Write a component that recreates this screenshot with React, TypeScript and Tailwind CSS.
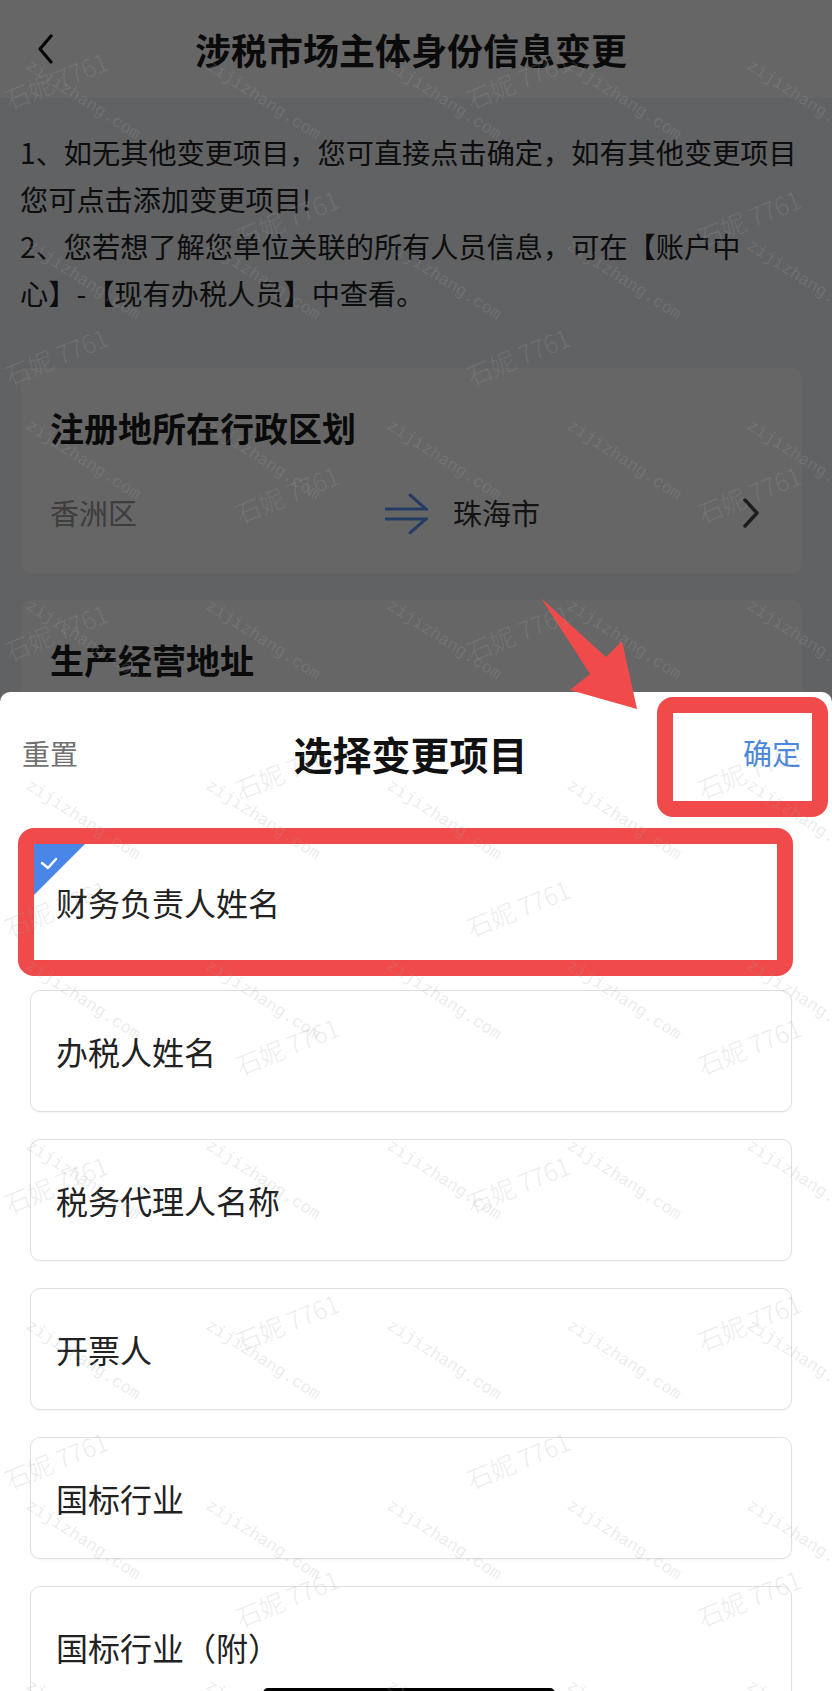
const items = ['财务负责人姓名', '办税人姓名', '税务代理人名称', '开票人', '国标行业', '国标行业（附）']

const notice = [
  '1、如无其他变更项目，您可直接点击确定，如有其他变更项目',
  '您可点击添加变更项目!',
  '2、您若想了解您单位关联的所有人员信息，可在【账户中',
  '心】-【现有办税人员】中查看。',
]

// watermark grid of the screenshot
const nameMarks: { x: number; y: number }[] = []
for (let k = 0; k < 13; k++) {
  const y = 80 + 138 * k
  const xs = k % 2 === 0 ? [56, 518] : [287, 749]
  xs.forEach((x) => nameMarks.push({ x, y }))
}
const siteMarks: { x: number; y: number }[] = []
for (let j = 0; j < 10; j++) {
  for (let i = 0; i < 5; i++) {
    siteMarks.push({ x: 32 + 180.3 * i, y: 57 + 180 * j })
  }
}

function Card({ title, children, className }: { title: string; children?: React.ReactNode; className?: string }) {
  return (
    <div className={`ml-[21px] mr-[30px] rounded-[10px] bg-white px-[29px] pt-[40px] ${className ?? ''}`}>
      <div className="text-[34px] font-bold leading-[40px] text-[#1a1a1a]">{title}</div>
      {children}
    </div>
  )
}

export default function App() {
  return (
    <div className="relative h-[1691px] w-[832px] overflow-hidden bg-[#f1f4f9] font-['Noto_Sans_CJK_SC','Noto_Sans',sans-serif]">
      {/* page under the sheet */}
      <div className="flex h-[98px] items-center bg-white pl-[37px]">
        <svg width="16" height="30" viewBox="0 0 16 30" fill="none">
          <polyline points="14,2 3,15 14,28" stroke="#111" strokeWidth="3.2" strokeLinecap="round" strokeLinejoin="round" />
        </svg>
        <h1 className="flex-1 pr-[63px] text-center text-[36px] font-bold text-[#1a1a1a]">涉税市场主体身份信息变更</h1>
      </div>

      <div className="pl-[20px] pt-[30px] text-[28.2px] leading-[47px] text-[#222]">
        {notice.map((line) => (
          <p key={line} className="whitespace-nowrap">{line}</p>
        ))}
      </div>

      <Card title="注册地所在行政区划" className="mt-[52px] pb-[40px]">
        <div className="mt-[45px] flex h-[40px] items-center text-[29px]">
          <span className="w-[335px] text-[#9a9a9a]">香洲区</span>
          <svg width="43" height="42" viewBox="0 0 43 42" fill="none" stroke="#5b95f5" strokeWidth="3" strokeLinecap="round">
            <path d="M1 17 H41 L25 3" />
            <path d="M1 27 H41 L25 41" />
          </svg>
          <span className="ml-[25px] flex-1 text-[#333]">珠海市</span>
          <svg className="mr-[14px]" width="16" height="30" viewBox="0 0 16 30" fill="none">
            <polyline points="2,2 14,15 2,28" stroke="#4a4a4a" strokeWidth="3.5" strokeLinecap="round" strokeLinejoin="round" />
          </svg>
        </div>
      </Card>

      <Card title="生产经营地址" className="mt-[27px] h-[300px]" />

      {/* dim layer */}
      <div className="absolute inset-0 bg-black/60" />

      {/* bottom sheet */}
      <div className="absolute inset-x-0 top-[692px] bottom-0 rounded-t-[10px] bg-white">
        <div className="flex h-[122px] items-center justify-between pl-[22px] pr-[31px]">
          <span className="text-[28px] text-[#707070]">重置</span>
          <span className="text-[39px] font-bold text-[#111]">选择变更项目</span>
          <span className="text-[29px] text-[#4a87dc]">确定</span>
        </div>
        <div className="flex flex-col gap-[27px] pt-[27px]">
          {items.map((item, i) => (
            <div
              key={item}
              className="relative ml-[30px] mr-[40px] flex h-[122px] shrink-0 items-center overflow-hidden rounded-[10px] border border-[#e0e0e0] pl-[25px] text-[32px] text-[#222] shadow-[0_1px_2px_rgba(0,0,0,0.05)]"
            >
              {i === 0 && (
                <svg className="absolute left-0 top-0" width="56" height="56" viewBox="0 0 56 56">
                  <polygon points="0,0 56,0 0,56" fill="#4a86e8" />
                  <polyline points="11,21 17,26 25,17" fill="none" stroke="#fff" strokeWidth="2.4" strokeLinecap="round" strokeLinejoin="round" />
                </svg>
              )}
              {item}
            </div>
          ))}
        </div>
      </div>

      {/* red annotations */}
      <svg className="pointer-events-none absolute left-0 top-0" width="832" height="1691" viewBox="0 0 832 1691">
        <path d="M541 598 L606 657 L622 641 L637 709 L570 690 L590 674 Z" fill="#f04a4a" />
      </svg>
      <div className="pointer-events-none absolute left-[657px] top-[697px] h-[120px] w-[171px] rounded-[16px] border-[16px] border-[#f04a4a]" />
      <div className="pointer-events-none absolute left-[18px] top-[828px] h-[148px] w-[775px] rounded-[16px] border-[16px] border-[#f04a4a]" />

      {/* home indicator */}
      <div className="absolute left-[263px] top-[1688px] h-[10px] w-[292px] rounded-full bg-black" />

      {/* watermarks */}
      <div className="pointer-events-none absolute inset-0">
        {nameMarks.map((m, i) => (
          <span
            key={`n${i}`}
            className="absolute whitespace-nowrap text-[25px] font-light leading-none text-[rgba(165,165,165,0.22)]"
            style={{ left: m.x, top: m.y, transform: 'translate(-50%, -50%) rotate(-22deg)' }}
          >
            石妮 7761
          </span>
        ))}
        {siteMarks.map((m, i) => (
          <span
            key={`s${i}`}
            className="absolute origin-top-left whitespace-nowrap font-['Liberation_Mono',monospace] text-[17px] leading-none text-[rgba(165,165,165,0.22)]"
            style={{ left: m.x, top: m.y, transform: 'rotate(33deg)' }}
          >
            zijizhang.com
          </span>
        ))}
      </div>
    </div>
  )
}
